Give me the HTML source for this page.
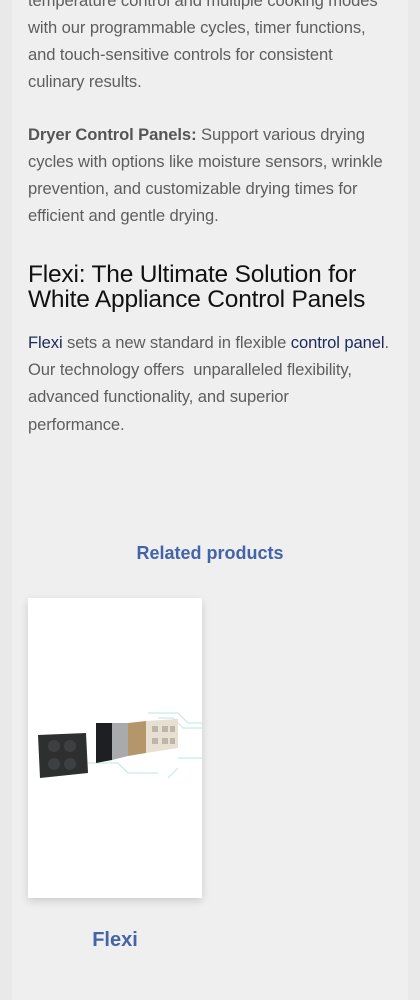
<!DOCTYPE html>
<html><head><meta charset="utf-8"><style>
html,body{margin:0;padding:0;}
body{width:420px;height:1000px;overflow:hidden;background:#e9e9e9;font-family:"Liberation Sans",sans-serif;position:relative;}
.wrap{position:absolute;left:12px;top:0;width:396px;height:1000px;background:#efefef;}
.t{position:absolute;left:28px;font-size:16.6px;color:#5e5e5e;white-space:nowrap;letter-spacing:-0.1px;line-height:27px;}
.t b{color:#555;}
.h{position:absolute;left:28px;top:262px;font-size:24.5px;line-height:25px;color:#111;white-space:nowrap;letter-spacing:-0.2px;}
a{color:#1c2a5a;text-decoration:none;}
.rel{position:absolute;left:0;width:420px;top:543px;text-align:center;color:#4464a8;font-size:18px;font-weight:bold;}
.card{position:absolute;left:28px;top:598px;width:174px;height:300px;background:#fff;box-shadow:0 3px 8px rgba(0,0,0,0.15);overflow:hidden;}
.fl{position:absolute;left:28px;width:174px;top:929px;text-align:center;color:#4464a8;font-size:20px;font-weight:bold;}
</style></head><body>
<div class="wrap"></div>
<div class="t" style="top:-13px">temperature control and multiple cooking modes</div>
<div class="t" style="top:14px">with our programmable cycles, timer functions,</div>
<div class="t" style="top:41px">and touch-sensitive controls for consistent</div>
<div class="t" style="top:68px">culinary results.</div>
<div class="t" style="top:121px"><b>Dryer Control Panels:</b> Support various drying</div>
<div class="t" style="top:148px">cycles with options like moisture sensors, wrinkle</div>
<div class="t" style="top:175px">prevention, and customizable drying times for</div>
<div class="t" style="top:202px">efficient and gentle drying.</div>
<div class="h">Flexi: The Ultimate Solution for<br>White Appliance Control Panels</div>
<div class="t" style="top:329px"><a>Flexi</a> sets a new standard in flexible <a>control panel</a>.</div>
<div class="t" style="top:356px">Our technology offers &nbsp;unparalleled flexibility,</div>
<div class="t" style="top:383px">advanced functionality, and superior</div>
<div class="t" style="top:411px">performance.</div>
<div class="rel">Related products</div>
<div class="card">
<svg width="174" height="300" viewBox="0 0 174 300">
<g stroke="#bfe6e6" stroke-width="1" fill="none">
<path d="M120 115 H150 L160 125 H174"/><path d="M130 120 H145 L155 130 H174"/><path d="M150 160 H174"/><path d="M60 165 H90 L100 175 H130"/><path d="M150 170 L140 180"/>
</g>
<polygon points="10,137 58,135 60,175 12,180" fill="#2e3030"/>
<circle cx="26" cy="148" r="6" fill="#3c4040"/><circle cx="42" cy="148" r="6" fill="#3c4040"/><circle cx="26" cy="166" r="6" fill="#3c4040"/><circle cx="42" cy="166" r="6" fill="#3c4040"/>
<polygon points="68,125 84,125 84,162 68,165" fill="#1e1f22"/>
<polygon points="84,125 100,125 100,158 84,162" fill="#a9aaac"/>
<polygon points="100,125 118,123 118,155 100,158" fill="#b5956a"/>
<polygon points="118,123 150,121 150,150 118,155" fill="#e6dfd2"/>
<g fill="#bdb6a8"><rect x="124" y="128" width="6" height="6"/><rect x="134" y="128" width="6" height="6"/><rect x="142" y="128" width="5" height="6"/><rect x="124" y="140" width="6" height="6"/><rect x="134" y="140" width="6" height="6"/><rect x="142" y="140" width="5" height="6"/></g>
</svg>
</div>
<div class="fl">Flexi</div>
</body></html>
